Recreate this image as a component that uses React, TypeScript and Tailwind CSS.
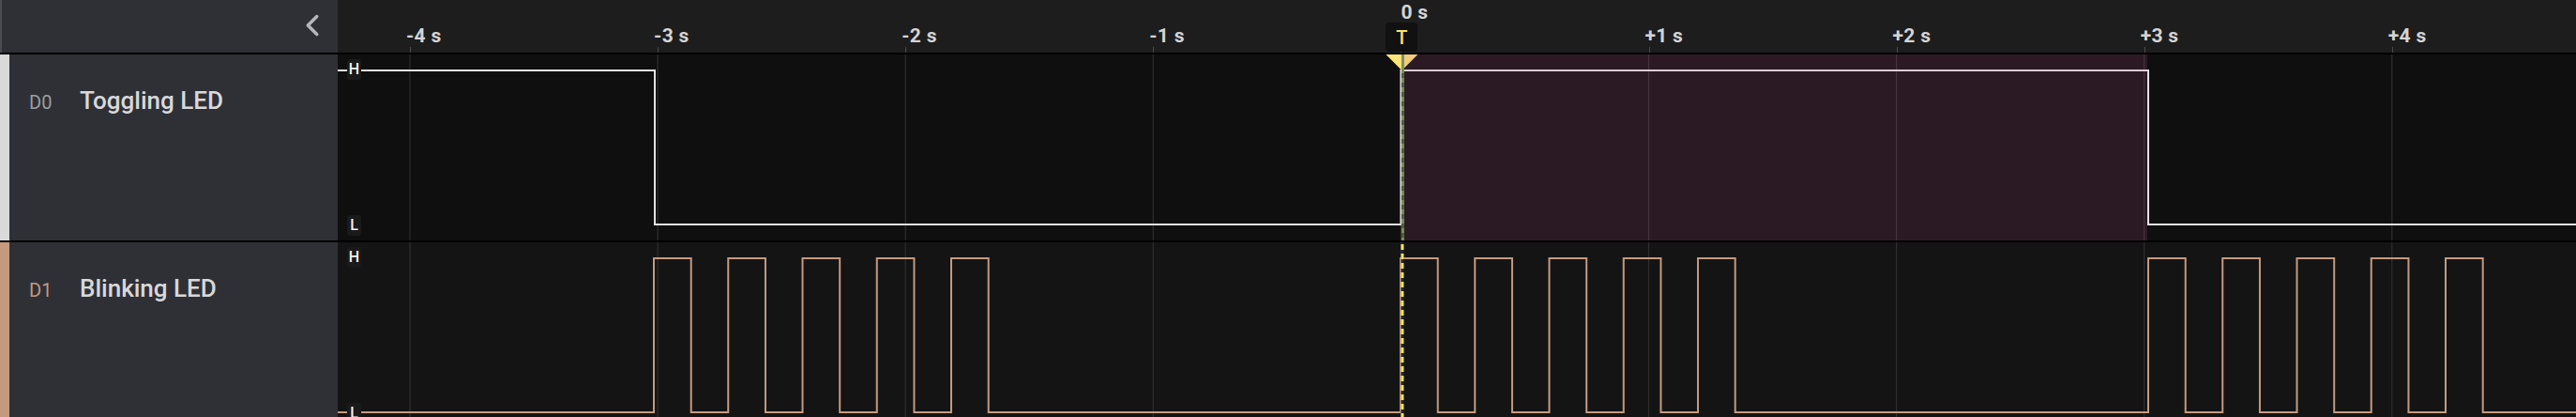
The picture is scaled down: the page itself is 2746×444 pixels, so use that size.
const PLOT_W = 2386;
const HI = 17;
const LO = 181;
const TICK0 = 77;
const TICK_STEP = 264.1;
const TICKS = [-4, -3, -2, -1, 0, 1, 2, 3, 4];

const tickX = (t: number) => TICK0 + TICK_STEP * (t + 4);

function pulseTrain(starts: number[]) {
  let d = `M0,${LO}`;
  for (const s of starts) {
    for (let k = 0; k < 5; k++) {
      const r = s + k * 79.25;
      const f = r + 39.7;
      d += ` H${r} V${HI} H${f} V${LO}`;
    }
  }
  return d + ` H${PLOT_W}`;
}

function Chevron() {
  return (
    <svg width="38" height="38" viewBox="0 0 24 24" fill="none">
      <path d="M15 18l-6-6 6-6" stroke="#b6b7bc" strokeWidth="2.2" strokeLinecap="round" strokeLinejoin="round" />
    </svg>
  );
}

function LevelBadge({ label, y }: { label: string; y: number }) {
  return (
    <div
      className="absolute left-[10px] w-[15px] h-[22px] rounded-[3px] bg-[#1a1a1a] flex items-center justify-center text-[16px] leading-none font-medium text-[#f2f2f2]"
      style={{ top: y - 11 }}
    >
      {label}
    </div>
  );
}

function Grid({ h }: { h: number }) {
  return (
    <>
      {TICKS.map((t) => (
        <line key={t} x1={tickX(t)} x2={tickX(t)} y1={0} y2={h} stroke="#2e2e2e" strokeWidth="1.2" />
      ))}
    </>
  );
}

function Ruler() {
  return (
    <div className="relative flex-1 bg-[#1d1d1d] overflow-hidden">
      {TICKS.map((t) => (
        <div key={t}>
          <div className="absolute top-[50px] h-[6px] w-px bg-[#4b4b4b]" style={{ left: tickX(t) }} />
          {t !== 0 && (
            <span
              className="absolute top-[28px] text-[21px] leading-[21px] font-bold tracking-[0.3px] text-[#d4d4d4] whitespace-nowrap"
              style={{ left: tickX(t) - 4 }}
            >
              {t < 0 ? `-${-t} s` : `+${t} s`}
            </span>
          )}
        </div>
      ))}
      <span
        className="absolute top-[3px] text-[21px] leading-[21px] font-bold tracking-[0.3px] text-[#d4d4d4] whitespace-nowrap"
        style={{ left: tickX(0) }}
      >
        0 s
      </span>
      <div
        className="absolute top-[24px] w-[34px] h-[31px] rounded-[4px] bg-[#111111] flex items-center justify-center text-[20px] font-medium text-[#f6e26e]"
        style={{ left: tickX(0) - 16 }}
      >
        T
      </div>
    </div>
  );
}

function ChannelLabel({ id, name, idColor, bar }: { id: string; name: string; idColor: string; bar: string }) {
  return (
    <div className={`w-[360px] shrink-0 bg-[#2f3036] border-l-[10px] ${bar} pl-[21px] pt-[36px] flex items-baseline`}>
      <span className={`w-[54px] text-[20px] ${idColor}`}>{id}</span>
      <span className="text-[26px] leading-[26px] font-medium text-[#d8d8da]">{name}</span>
    </div>
  );
}

export default function App() {
  const trig = tickX(0) + 1;
  return (
    <div className="w-[2746px] h-[444px] flex flex-col bg-black overflow-hidden font-['Roboto',sans-serif]">
      {/* header */}
      <div className="h-[58px] flex border-b-2 border-black">
        <div className="w-[360px] shrink-0 bg-[#2f3036] border-l-2 border-[#4b4c52] flex items-center justify-end pr-[8px] pb-[3px]">
          <Chevron />
        </div>
        <Ruler />
      </div>

      {/* D0 */}
      <div className="h-[200px] flex border-b-2 border-black">
        <ChannelLabel id="D0" name="Toggling LED" idColor="text-[#9d9ea2]" bar="border-[#d9d9d9]" />
        <div className="relative flex-1 bg-[#0f0f0f]">
          <svg width={PLOT_W} height="198" className="absolute inset-0">
            <Grid h={198} />
            <path
              d={`M0,${HI} H338 V${LO} H${trig - 1} V${HI} H1930 V${LO} H${PLOT_W}`}
              fill="none"
              stroke="#e2e2e2"
              strokeWidth="2"
            />
            <polygon points={`${trig - 17},0 ${trig},17 ${trig},0`} fill="#fde57a" />
            <polygon points={`${trig},0 ${trig},17 ${trig + 17},0`} fill="#fde57a" />
            <line x1={trig + 1} x2={trig + 1} y1={0} y2={198} stroke="#7d905a" strokeWidth="3" />
            <line x1={trig + 1} x2={trig + 1} y1={20} y2={198} stroke="#4d5c3a" strokeWidth="3" strokeDasharray="5 5" />
            <rect x={trig + 2} y={0} width={1929 - trig - 2} height={198} fill="rgba(182,81,140,0.17)" />
          </svg>
          <LevelBadge label="H" y={16} />
          <LevelBadge label="L" y={182} />
        </div>
      </div>

      {/* D1 */}
      <div className="flex-1 flex">
        <ChannelLabel id="D1" name="Blinking LED" idColor="text-[#c49a7e]" bar="border-[#c49a7e]" />
        <div className="relative flex-1 bg-[#141414] overflow-hidden">
          <svg width={PLOT_W} height="186" className="absolute inset-0">
            <Grid h={186} />
            <path d={pulseTrain([337, 1133, 1930])} fill="none" stroke="#c49a7e" strokeWidth="2" />
            <line x1={trig + 0.5} x2={trig + 0.5} y1={0} y2={186} stroke="#2a2a2a" strokeWidth="3" />
            <line x1={trig + 0.5} x2={trig + 0.5} y1={2} y2={186} stroke="#f8e468" strokeWidth="3" strokeDasharray="6 4" />
          </svg>
          <LevelBadge label="H" y={16} />
          <LevelBadge label="L" y={182} />
        </div>
      </div>
    </div>
  );
}
